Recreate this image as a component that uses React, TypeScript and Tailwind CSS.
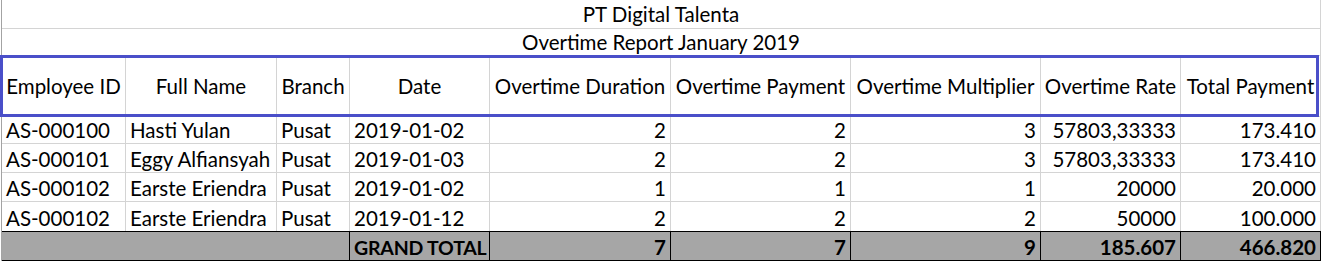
const cols = "grid grid-cols-[124px_151px_73px_140px_181px_180px_190px_140px_140px]";

const headers = [
  "Employee ID",
  "Full Name",
  "Branch",
  "Date",
  "Overtime Duration",
  "Overtime Payment",
  "Overtime Multiplier",
  "Overtime Rate",
  "Total Payment",
];

const rows = [
  ["AS-000100", "Hasti Yulan", "Pusat", "2019-01-02", "2", "2", "3", "57803,33333", "173.410"],
  ["AS-000101", "Eggy Alfiansyah", "Pusat", "2019-01-03", "2", "2", "3", "57803,33333", "173.410"],
  ["AS-000102", "Earste Eriendra", "Pusat", "2019-01-02", "1", "1", "1", "20000", "20.000"],
  ["AS-000102", "Earste Eriendra", "Pusat", "2019-01-12", "2", "2", "2", "50000", "100.000"],
];

const totals = ["7", "7", "9", "185.607", "466.820"];

export default function App() {
  return (
    <div className="relative w-[1322px] h-[262px] overflow-hidden bg-white text-black font-['Lato',sans-serif] text-[20.5px] leading-none">
      <div className="ml-px w-[1320px] border-l border-[#a3a3a3]">
        <div className="h-[29px] flex items-center justify-center border-b border-r border-[#d4d4d4]">
          PT Digital Talenta
        </div>
        <div className="h-[27px] flex items-center justify-center border-b border-r border-[#d4d4d4]">
          Overtime Report January 2019
        </div>
        <div className={`${cols} h-[61px] border-b border-[#d4d4d4]`}>
          {headers.map((h) => (
            <div key={h} className="flex items-center justify-center border-r border-[#d4d4d4] whitespace-nowrap">
              {h}
            </div>
          ))}
        </div>
        {rows.map((r, i) => (
          <div key={i} className={`${cols} ${i === 0 ? "h-[27px]" : "h-[29px]"} ${i < rows.length - 1 ? "border-b border-[#d4d4d4]" : ""}`}>
            {r.map((c, j) => (
              <div
                key={j}
                className={`flex items-end pb-[3px] border-r border-[#d4d4d4] whitespace-nowrap ${
                  j < 4 ? "justify-start pl-[4px]" : "justify-end pr-[4px]"
                }`}
              >
                {c}
              </div>
            ))}
          </div>
        ))}
        <div className={`${cols} h-[30px] bg-[#a6a6a6] border-y border-black font-bold`}>
          <div className="col-span-3 border-r border-black" />
          <div className="flex items-end pb-[3px] pl-[4px] border-r border-black whitespace-nowrap text-[19.5px] tracking-[-0.2px]">
            GRAND TOTAL
          </div>
          {totals.map((t, j) => (
            <div key={j} className="flex items-end justify-end pb-[3px] pr-[4px] border-r border-black">
              {t}
            </div>
          ))}
        </div>
      </div>
      {/* header highlight */}
      <div className="absolute left-0 top-[55px] w-[1319px] h-[62px] border-[3px] border-[#4a4fc9]" />
    </div>
  );
}
